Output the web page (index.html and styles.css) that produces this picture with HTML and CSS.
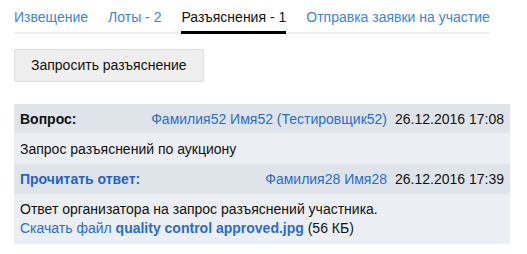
FILE: index.html
```html
<!DOCTYPE html>
<html lang="ru">
<head>
<meta charset="utf-8">
<link rel="stylesheet" href="styles.css">
</head>
<body>
<nav class="tabs">
  <a class="tab">Извещение</a>
  <a class="tab">Лоты - 2</a>
  <span class="tab active">Разъяснения - 1</span>
  <a class="tab">Отправка заявки на участие</a>
</nav>
<div class="actions">
  <button class="btn">Запросить разъяснение</button>
</div>
<section class="qa">
  <div class="row head">
    <span class="label">Вопрос:</span>
    <span class="meta"><a class="user">Фамилия52 Имя52</a> <a class="user">(Тестировщик52)</a><span class="date">26.12.2016 17:08</span></span>
  </div>
  <div class="row body">Запрос разъяснений по аукциону</div>
  <div class="row head answer-head">
    <a class="label link">Прочитать ответ:</a>
    <span class="meta"><a class="user">Фамилия28 Имя28</a><span class="date">26.12.2016 17:39</span></span>
  </div>
  <div class="row body answer">
    <div>Ответ организатора на запрос разъяснений участника.</div>
    <div><a class="user">Скачать файл <b>quality control approved.jpg</b></a> (56 КБ)</div>
  </div>
</section>
</body>
</html>
```
FILE: styles.css
```css
html, body {
  margin: 0;
  padding: 0;
  background: #fff;
  font-family: "Liberation Sans", Arial, sans-serif;
  color: #111;
}
body {
  padding: 8px 14px 0 14px;
}
.tabs {
  display: inline-flex;
  gap: 20px;
  border-bottom: 2px solid #eeeeea;
  font-size: 14px;
  line-height: 18px;
}
.tab {
  display: block;
  padding-bottom: 5px;
  border-bottom: 3px solid transparent;
  margin-bottom: -2px;
  color: #3d86cc;
  text-decoration: none;
}
.tab.active {
  color: #111;
  border-bottom-color: #000;
}
.actions {
  margin-top: 15px;
}
.btn {
  font-family: inherit;
  font-size: 14px;
  line-height: 17px;
  color: #111;
  padding: 7px 16px;
  background: #efefef;
  border: 1px solid #dcdcdc;
  border-radius: 2px;
  white-space: nowrap;
}
.qa {
  margin-top: 22px;
  width: 496px;
  font-size: 14px;
  line-height: 19px;
}
.row {
  padding: 6px 6px 4px;
}
.head {
  display: flex;
  justify-content: space-between;
  background: #dfe4ea;
}
.answer-head {
  padding: 6px 6px 5px;
}
.body {
  background: #ebeef2;
  padding: 7px 6px 5px;
}
.answer {
  padding: 6px 6px 6px;
}
.label {
  font-weight: bold;
}
.link {
  color: #2563c0;
}
.user {
  color: #2b6cc4;
  text-decoration: none;
}
.date {
  margin-left: 8px;
  color: #111;
}
```
